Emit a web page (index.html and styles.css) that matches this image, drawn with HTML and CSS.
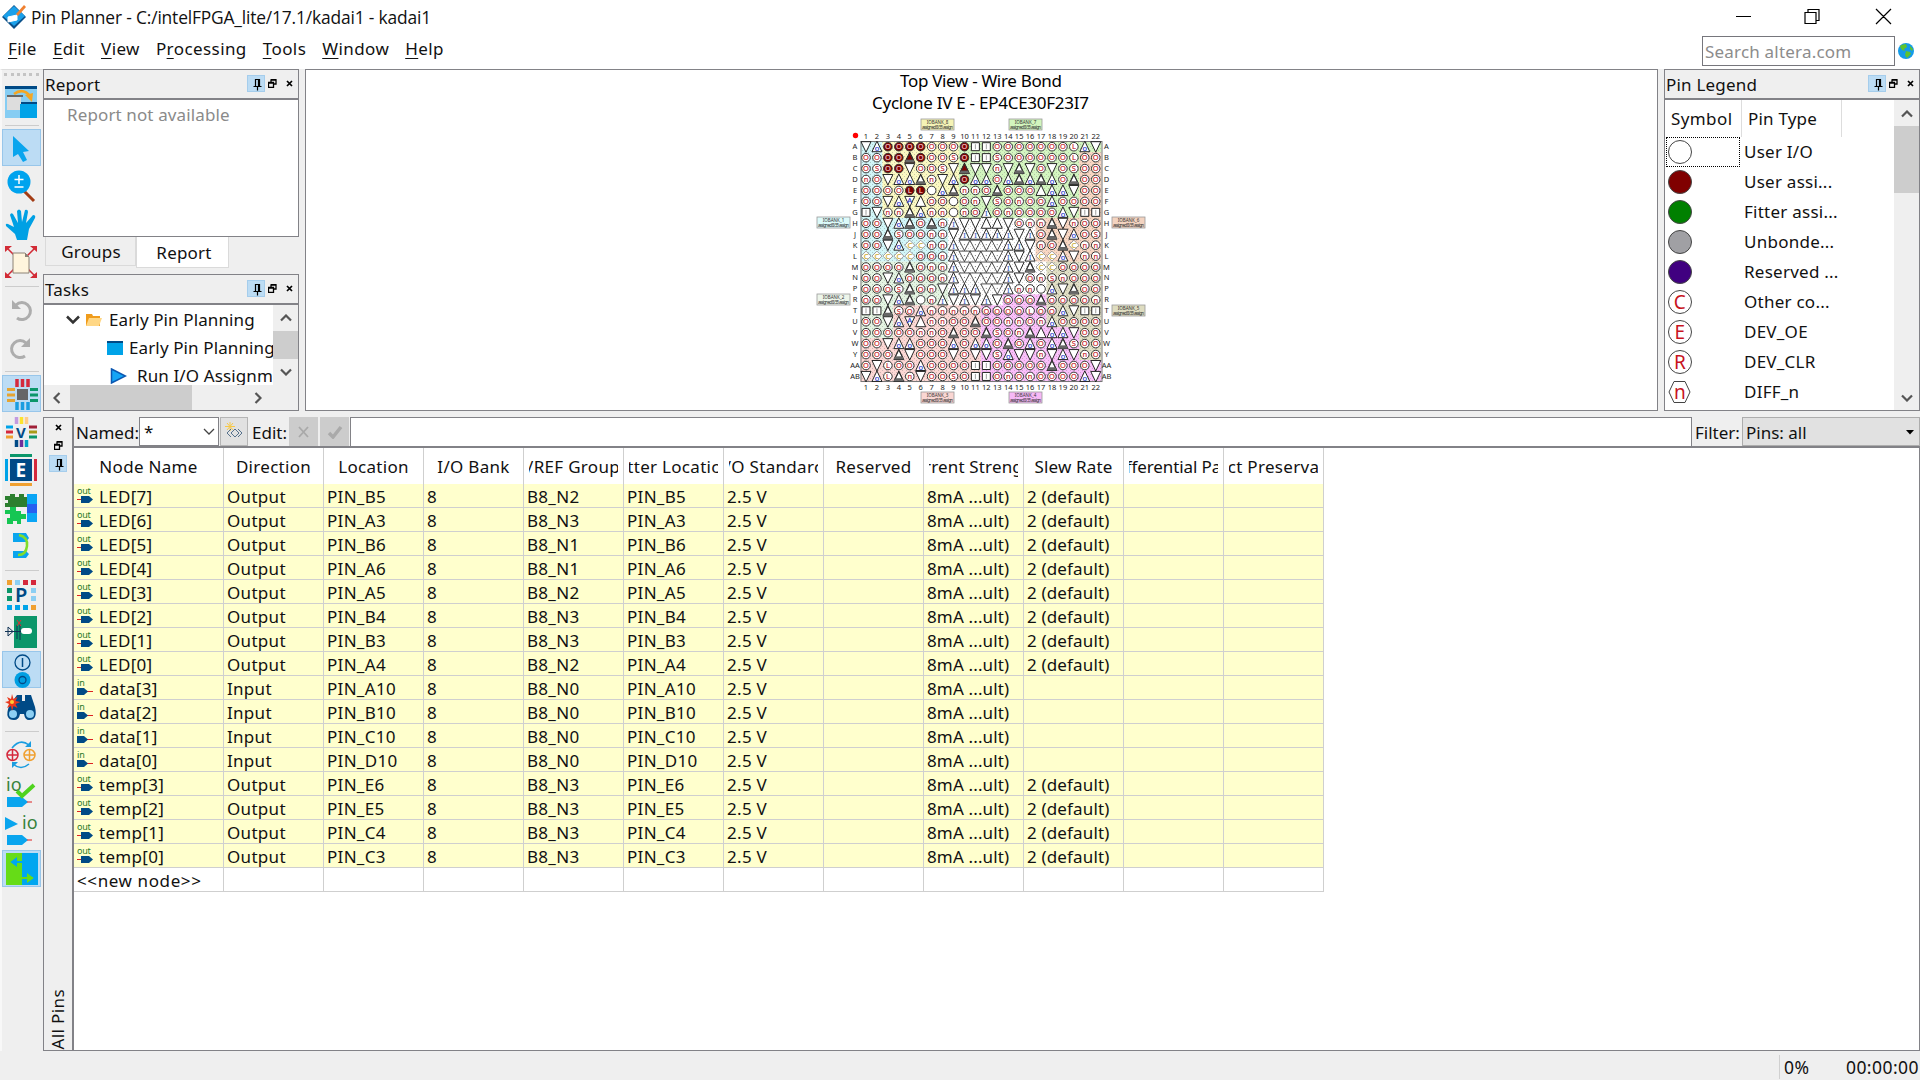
FILE: index.html
```
<!DOCTYPE html>
<html lang="en">
<head>
<meta charset="utf-8">
<title>Pin Planner</title>
<link rel="stylesheet" href="styles.css">
</head>
<body>
<svg class="defs" width="0" height="0">
  <symbol id="pin" viewBox="0 0 16 15"><path d="M7.500 3.500h4v7h-4zM5.500 10.500h8M9.500 10.500v4M10.500 4v6" fill="none" stroke="#000" stroke-width="1.200"/></symbol>
  <symbol id="float" viewBox="0 0 9 9"><path d="M3 3V1h5v4H6M3 .7h5.500M.5 3.500h5v5h-5zM.5 4h5" fill="none" stroke="#000" stroke-width="1.300"/></symbol>
  <symbol id="close" viewBox="0 0 7 7"><path d="M1 1l5 5M6 1l-5 5" stroke="#000" stroke-width="1.700"/></symbol>
  <symbol id="chev" viewBox="0 0 12 8"><path d="M1 1.500l5 5 5-5" fill="none" stroke="#555" stroke-width="2.200"/></symbol>
</svg>

<header class="titlebar">
  <svg class="logo" width="24" height="24" viewBox="0 0 24 24"><path d="M12 0l12 12-12 12L0 12z" fill="#0a4f88"/><path d="M12 1l11 10-11 10L1 11z" fill="#1aa0ea"/><path d="M6 12l9-2v5l-9 2z" fill="#fff" stroke="#fff"/><path d="M14 9l8-9 2 2-8 9z" fill="#f08030"/></svg>
  <span class="title">Pin Planner - C:/intelFPGA_lite/17.1/kadai1 - kadai1</span>
  <svg class="winbtns" width="160" height="20" viewBox="0 0 160 20" fill="none" stroke="#000" stroke-width="1.200"><path d="M0 9.500h15M69 5.500h11v11H69zM72 5V2.500h11v11h-3M140 2l15 15M155 2l-15 15"/></svg>
</header>
<div class="menubar">
  <nav class="menu"><span><u>F</u>ile</span><span><u>E</u>dit</span><span><u>V</u>iew</span><span>P<u>r</u>ocessing</span><span><u>T</u>ools</span><span><u>W</u>indow</span><span><u>H</u>elp</span></nav>
  <div class="search">Search altera.com</div>
  <svg width="16" height="16" viewBox="0 0 16 16"><circle cx="8" cy="8" r="8" fill="#149be8"/><path d="M3 2l5-1 1 3-3 2 1 2-3-1-2-3zM8 8l4 1 1 2-4 4-2-3zM12 3l3 3-1 2-2-2z" fill="#5fc32e"/></svg>
</div>

<div class="body">
  <aside class="tools">
    <i class="grip"></i>
    <b class="tb"><svg viewBox="0 0 32 32"><path fill="#86cdf3" d="M0 0h32v32H0z"/><path fill="#004a86" d="M0 0h32v3H0zM15 16h17v2H15z"/><path fill="#ddd" d="M2 10h14v14H2z"/><path fill="#666" d="M2 9h16v2H2z"/><path fill="#00a3e8" d="M15 18h17v14H15z"/><path d="M9 8q9-7 17 3" fill="none" stroke="#f5a623" stroke-width="2.500"/><path d="M20 9l7 7 1-9z" fill="#f5a623"/></svg></b>
    <i class="sep s8"></i>
    <b class="tb on"><svg viewBox="0 0 32 32"><path d="M8 4v21l5-3 5 8 4-2-4-8 6-1z" fill="#0aa5ee"/></svg></b>
    <b class="tb"><svg viewBox="0 0 32 32"><path d="M19 21l10 10" stroke="#a33c14" stroke-width="3"/><circle cx="14" cy="12" r="11.500" fill="#00a3ee"/><path d="M9.500 9.500h9M14 5v9M9.500 17h9" stroke="#fff" stroke-width="1.500"/></svg></b>
    <b class="tb"><svg viewBox="0 0 32 32"><path d="M12 32l-2-6L1 18q-1-3 2-2l6 3L5 7q1-3 3-1l5 9-1-12q2-3 4 0l1 11 3-12q3-1 3 2l-2 11 7-8q3 0 2 3l-6 11-2 11z" fill="#00a0e4"/></svg></b>
    <b class="tb"><svg viewBox="0 0 32 32"><path d="M2 2l28 28M30 2L2 30" stroke="#d22b36" stroke-width="1.500"/><path d="M0 0h7L0 6zM32 0h-7l7 6zM0 32h7l-7-6zM32 32h-7l7-6z" fill="#d22b36"/><path d="M8 7h12l4 4v16H8z" fill="#fff5dd" stroke="#8c8376"/><path d="M20 7v4h4z" fill="#8c8376"/></svg></b>
    <i class="sep s10"></i>
    <b class="tb"><svg viewBox="0 0 32 32"><path d="M12 24a8.500 8.500 0 1 0-1-13" fill="none" stroke="#adadad" stroke-width="3"/><path d="M7 6v9h9z" fill="#adadad"/></svg></b>
    <b class="tb"><svg viewBox="0 0 32 32"><path d="M20 24a8.500 8.500 0 1 1 1-13" fill="none" stroke="#adadad" stroke-width="3"/><path d="M25 6v9h-9z" fill="#adadad"/></svg></b>
    <i class="sep s8"></i>
    <b class="tb on"><svg viewBox="0 0 32 32"><path d="M12 11h11v11H12z" fill="#666"/><path d="M12 1v8M17.500 1v8M23 1v8" stroke="#d5293d" stroke-width="3.500"/><path d="M12 24v8M17.500 24v8M23 24v8" stroke="#1a9de0" stroke-width="3.500"/><path d="M2 11.500h8M2 17h8M2 22.500h8" stroke="#e5a431" stroke-width="3"/><path d="M25 11.500h8M25 17h8M25 22.500h8" stroke="#0b966a" stroke-width="3"/></svg></b>
    <b class="tb"><svg viewBox="0 0 32 32"><path d="M16.500 1v7" stroke="#fce32d" stroke-width="3.500"/><path d="M11.500 1v7" stroke="#c39be0" stroke-width="3.500"/><path d="M21.500 1v7" stroke="#fc8" stroke-width="3.500"/><path d="M11.500 24v7" stroke="#004a86" stroke-width="3.500"/><path d="M16.500 24v7" stroke="#6e2f9b" stroke-width="3.500"/><path d="M21.500 24v7" stroke="#00a3c8" stroke-width="3.500"/><path d="M1 11h7" stroke="#00a3e8" stroke-width="3"/><path d="M1 16h7" stroke="#d5293d" stroke-width="3"/><path d="M1 21h7" stroke="#f0a030" stroke-width="3"/><path d="M24 11h8" stroke="#a02038" stroke-width="3"/><path d="M24 16h8" stroke="#a89b18" stroke-width="3"/><path d="M24 21h8" stroke="#0b966a" stroke-width="3"/><text x="11" y="21.500" class="ic">V</text></svg></b>
    <b class="tb"><svg viewBox="0 0 32 32"><path d="M5 5h22v22H5z" fill="#004a86"/><path d="M5 0h22v3H5z" fill="#0b966a"/><path d="M5 29h22v3H5z" fill="#f0a030"/><path d="M0 5h3v22H0z" fill="#00a3e8"/><path d="M29 5h3v22h-3z" fill="#d5293d"/><text x="10.500" y="23" class="ic e">E</text></svg></b>
    <b class="tb"><svg viewBox="0 0 32 32"><path d="M0 4h5V2h5v3h4V2h5v3h3v10H0v-4h3V8H0z" fill="#2c7f2f"/><path d="M0 18h5v-3h6v4h5v3h5v5h-5v5h-4v-3H8v3H2v-6h3v-4H0z" fill="#16c653"/><path d="M22 2h10v28H22z" fill="#0aa5f5"/><path d="M22 12h10v9H22z" fill="#275ff0"/></svg></b>
    <b class="tb"><svg viewBox="0 0 32 32"><path d="M8 3h13l3 5-3 4H8zM8 21h13l3 3-3 4H8z" fill="#0aa5ee"/><path d="M14 5q9 2 8 11t-9 9" fill="none" stroke="#80dd2c" stroke-width="2.500"/></svg></b>
    <i class="sep s10"></i>
    <b class="tb"><svg viewBox="0 0 32 32"><g stroke-width="5" fill="none"><path d="M2 4.500h30" stroke="#d5293d" stroke-dasharray="5 3"/><path d="M2 4.500h5M26 29.500h5" stroke="#f0a030"/><path d="M10 4.500h5" stroke="#8ccff3"/><path d="M2 29.500h22" stroke="#00a3e8" stroke-dasharray="5 3"/><path d="M4.500 10v16" stroke="#0b966a" stroke-dasharray="5 3"/><path d="M28.500 10v16" stroke="#8ccff3" stroke-dasharray="5 3"/></g><text x="10" y="24" class="ic p">P</text></svg></b>
    <b class="tb"><svg viewBox="0 0 32 32"><path d="M9 0h23v32H9z" fill="#0b966a"/><path d="M0 15.500h17M12 9v14M15 8v16M8 15.500L3 11v9z" fill="#eee" stroke="#135" /><path d="M12 4l4 6M16 4l-4 6" stroke="#d33"/><rect x="16" y="12" width="11" height="6" rx="3" fill="#fff"/></svg></b>
    <b class="tb on"><svg viewBox="0 0 32 32"><circle cx="17.500" cy="8.500" r="7.500" fill="none" stroke="#004a86" stroke-width="1.300"/><path d="M17.500 4v9" stroke="#004a86" stroke-width="1.500"/><circle cx="17.500" cy="26" r="8" fill="#009fe2"/><circle cx="17.500" cy="26" r="3.500" fill="none" stroke="#004a86" stroke-width="1.300"/></svg></b>
    <b class="tb"><svg viewBox="0 0 32 32"><path d="M4 14L12 3h5v6h3V3h6l4 12q3 13-6 13-4 0-5-6h-4q-1 6-6 6Q-1 28 4 14z" fill="#004a86"/><circle cx="8" cy="22" r="4" fill="#8ccff3"/><circle cx="25" cy="22" r="4" fill="#8ccff3"/><path d="M7 2l1.500 5 4-2-2 4 5 1-5 2 2 4-4-2-1.500 5-1-5-4 2 2-4-4-2 4-1-2-4 4 2z" fill="#e9381c"/><circle cx="7" cy="10" r="2" fill="#fc3"/></svg></b>
    <i class="sep s9"></i>
    <b class="tb"><svg viewBox="0 0 32 32"><g fill="none" stroke-width="1.500"><path d="M7 9q8-10 17-3M24 25q-8 7-16 0" stroke="#1a9de0"/><circle cx="7.500" cy="16" r="5.500" stroke="#d5293d"/><path d="M2 16h11M7.500 10.500v11" stroke="#d5293d"/><circle cx="24.500" cy="16" r="5.500" stroke="#f0a030"/><path d="M19 16h11M24.500 10.500v11" stroke="#f0a030"/></g><path d="M20 8h6V2zM7 29v-6h6z" fill="#1a9de0"/></svg></b>
    <b class="tb"><svg viewBox="0 0 32 32"><text x="1" y="14" class="io">io</text><path d="M2 20h15l6 5-6 5H2z" fill="#0aa5ee"/><path d="M22 25h5" stroke="#d22"/><path d="M12 14l5 5L29 8" fill="none" stroke="#4fd31e" stroke-width="4"/></svg></b>
    <b class="tb"><svg viewBox="0 0 32 32"><path d="M0 2l13 7-13 6z" fill="#0aa5ee"/><text x="17" y="14" class="io">io</text><path d="M2 20h15l6 5-6 5H2z" fill="#0aa5ee"/><path d="M22 25h5" stroke="#d22"/></svg></b>
    <b class="tb on"><svg viewBox="0 0 32 32"><path d="M1 0h16v32H1z" fill="#66dc17"/><path d="M17 0h16v32H17z" fill="#00a6f0"/><path d="M17 9H7M11 6l-4 3 4 3z" fill="#00a6f0" stroke="#00a6f0" stroke-width="2"/><path d="M17 25h11M23 22l4 3-4 3z" fill="#66dc17" stroke="#66dc17" stroke-width="2"/></svg></b>
  </aside>

  <main class="work">
    <section class="upper">
      <div class="left">
        <div class="dock report">
          <div class="dtitle"><span>Report</span><svg class="pin"><use href="#pin"/></svg><svg class="flt"><use href="#float"/></svg><svg class="cls"><use href="#close"/></svg></div>
          <div class="rbody">Report not available</div>
        </div>
        <div class="tabs"><span class="tab">Groups</span><span class="tab sel">Report</span></div>
        <div class="dock tasks">
          <div class="dtitle"><span>Tasks</span><svg class="pin"><use href="#pin"/></svg><svg class="flt"><use href="#float"/></svg><svg class="cls"><use href="#close"/></svg></div>
          <div class="tbody">
            <div class="tree">
              <div class="n1"><svg width="14" height="10"><path d="M1 1.500l6 6 6-6" fill="none" stroke="#333" stroke-width="2.500"/></svg><svg width="16" height="14"><path d="M0 1h6l1 2h7v10H0z" fill="#f09c1c"/><path d="M3 5h13l-3 8H0z" fill="#ffd785"/></svg><span>Early Pin Planning</span></div>
              <div class="n2"><svg width="16" height="14"><path d="M0 0h16v14H0z" fill="#00a3e8"/><path d="M0 0h16v2H0z" fill="#004a86"/></svg><span>Early Pin Planning</span></div>
              <div class="n3"><svg width="17" height="16"><path d="M1.500 1l14 7-14 7z" fill="#16a5f5" stroke="#0b56b0" stroke-width="1.500"/></svg><span>Run I/O Assignm</span></div>
            </div>
            <div class="vs"><svg class="up"><use href="#chev"/></svg><i></i><svg><use href="#chev"/></svg></div>
          </div>
          <div class="hs"><svg class="lf"><use href="#chev"/></svg><i></i><svg class="rt"><use href="#chev"/></svg></div>
        </div>
      </div>
      <div class="view"><svg id="chip" width="1350" height="340" viewBox="306 70 1350 340"></svg></div>
      <div class="dock legend">
        <div class="dtitle"><span>Pin Legend</span><svg class="pin"><use href="#pin"/></svg><svg class="flt"><use href="#float"/></svg><svg class="cls"><use href="#close"/></svg></div>
        <div class="lwrap">
          <div class="lmain">
            <div class="lhead"><span>Symbol</span><span>Pin Type</span></div>
            <div id="legend"></div>
          </div>
          <div class="vs lvs"><svg class="up"><use href="#chev"/></svg><i></i><svg><use href="#chev"/></svg></div>
        </div>
      </div>
    </section>

    <section class="lower">
      <div class="side"><svg class="cls"><use href="#close"/></svg><svg class="flt"><use href="#float"/></svg><svg class="pin"><use href="#pin"/></svg><span>All Pins</span></div>
      <div class="pins">
        <div class="editbar">
          <label>Named:</label>
          <div class="combo"><span>*</span><svg width="12" height="8"><path d="M1 1l5 5 5-5" fill="none" stroke="#444" stroke-width="1.300"/></svg></div>
          <div class="sbtn"><svg width="20" height="20"><path d="M5 0v9M0 4.500h10M2 1l6 7M8 1L2 8" stroke="#f7c948"/><path d="M6 7l-4 4 4 4M10 7l-4 4 4 4M10 7l4 4-4 4M13 7l4 4-4 4" fill="none" stroke="#357" stroke-width=".8"/></svg></div>
          <label class="ed">Edit:</label>
          <div class="gbtn"><svg width="14" height="14"><path d="M2 2l9 10M11 2L2 12" stroke="#a9a9a9" stroke-width="1.800"/></svg></div>
          <div class="gbtn g2"><svg width="16" height="14"><path d="M2 8l4 4 8-10" fill="none" stroke="#aaa" stroke-width="3.500"/></svg></div>
          <div class="field"></div>
          <label class="fl">Filter:</label>
          <div class="filter"><span>Pins: all</span><svg width="8" height="5"><path d="M0 0h8L4 4.500z"/></svg></div>
        </div>
        <div class="grid" id="grid"></div>
      </div>
    </section>
  </main>
</div>
<footer class="status"><span class="pct">0%</span><span>00:00:00</span></footer>
<script src="script.js"></script>
</body>
</html>
```
FILE: styles.css
```
* { box-sizing: border-box; }
body { margin: 0; width: 1920px; height: 1080px; overflow: hidden; background: #efefef; color: #111; font: 17px/24px "Noto Sans", "Noto Sans CJK JP", sans-serif; display: flex; flex-direction: column; white-space: nowrap; }
svg { display: block; flex: none; }
.defs { position: absolute; }
.titlebar { height: 33px; background: #fff; display: flex; align-items: center; padding-left: 2px; flex: none; }
.title { margin-left: 5px; flex: 1; font: 17.4px/24px "Open Sans", "Noto Sans", sans-serif; letter-spacing: -.17px; }
.winbtns { margin-right: 24px; }
.menubar { height: 36px; background: #fff; display: flex; padding-right: 6px; flex: none; }
.menu { display: flex; gap: 16px; padding: 4px 0 0 8px; flex: 1; letter-spacing: .42px; }
.menu u { text-underline-offset: 3px; text-decoration-thickness: 1px; }
.search { width: 193px; height: 30px; border: 1px solid #76767c; margin: 3px 3px 0 0; padding: 3px 2px; color: #8c8c8c; letter-spacing: .2px; }
.menubar > svg { margin-top: 10px; }
.body { display: flex; height: 982px; flex: none; }
.tools { width: 43px; display: flex; flex-direction: column; border-top: 1px solid #ddd; border-left: 2px solid #f8f8f8; flex: none; }
.grip { flex: none; margin: 0 4px 7px 2px; border-bottom: 3px dotted #c4c4c4; height: 6px; }
.tb { height: 38px; width: 39px; flex: none; display: flex; align-items: center; justify-content: center; border: 1px solid transparent; padding-right: 2px; }
.tb.on { background: #bcdcf4; border-color: #98c6ea; height: 37px; margin-bottom: 1px; }
.tb svg { width: 32px; height: 32px; overflow: visible; }
.ic { font: bold 15px "Noto Sans", sans-serif; fill: #004a86; }
.e { font-size: 19px; fill: #fff; }
.p { font-size: 20px; font-weight: 600; }
.io { font: 18px "Noto Sans", sans-serif; fill: #38823c; }
.sep { margin: 0 4px 0 3px; flex: none; background: linear-gradient(#ccc, #ccc) center / 100% 1px no-repeat; }
.s8 { height: 8px; } .s9 { height: 9px; } .s10 { height: 10px; }
.work { flex: 1; display: flex; flex-direction: column; min-width: 0; }
.upper { height: 342px; display: flex; flex: none; }
.left { width: 256px; margin-right: 6px; display: flex; flex-direction: column; flex: none; }
.dock { border: 1px solid #828287; display: flex; flex-direction: column; }
.report { height: 168px; }
.dtitle { height: 30px; border-bottom: 2px solid #828287; display: flex; align-items: center; padding: 2px 5px 0 1px; flex: none; letter-spacing: .2px; }
.dtitle span { flex: 1; }
.pin { width: 16px; height: 15px; background: #bcdcf4; outline: 1px solid #a5cdec; margin-bottom: 3px; }
.flt { width: 9px; height: 9px; margin: 0 9px 3px 4px; }
.cls { width: 7px; height: 7px; margin-bottom: 3px; }
.rbody { flex: 1; background: #fff; color: #8a8a8a; padding: 3px 0 0 23px; letter-spacing: .12px; }
.tabs { height: 37px; display: flex; align-items: flex-start; padding-left: 2px; flex: none; }
.tab { width: 91px; height: 29px; border: 1px solid #dadada; border-top: 0; text-align: center; padding: 3px 0 0 1px; letter-spacing: .2px; }
.tab.sel { width: 93px; height: 31px; background: #fff; padding: 4px 0 0 3px; }
.tasks { height: 137px; }
.tbody { height: 80px; display: flex; background: #fff; overflow: hidden; }
.tree { flex: 1; overflow: hidden; min-width: 0; padding-top: 1px; letter-spacing: .12px; }
.tree > div { display: flex; align-items: center; height: 28px; }
.n1 { padding-left: 22px; } .n1 svg + svg { margin: 0 7px 0 6px; }
.n2 { padding-left: 63px; } .n2 svg { margin-right: 6px; }
.n3 { padding-left: 66px; } .n3 svg { margin-right: 10px; }
.vs { width: 25px; background: #efefef; display: flex; flex-direction: column; align-items: center; flex: none; }
.vs svg { width: 12px; height: 8px; margin: 9px 0; }
.vs i { width: 100%; height: 28px; background: #cdcdcd; flex: none; }
.up { transform: scaleY(-1); }
.lvs { justify-content: flex-start; }
.lvs svg { margin: 10px 0 8px; }
.lvs i { height: 67px; margin-bottom: auto; }
.hs { flex: 1; display: flex; align-items: center; background: #efefef; }
.hs svg { width: 12px; height: 8px; }
.hs i { width: 122px; align-self: stretch; background: #cdcdcd; margin: 0 60px 0 7px; }
.lf { transform: rotate(90deg); margin-left: 7px; } .rt { transform: rotate(-90deg); }
.view { width: 1353px; border: 1px solid #828287; background: #fff; margin-right: 6px; flex: none; }
#chip { font-family: "Noto Sans", sans-serif; }
.legend { width: 256px; flex: none; }
.lwrap { display: flex; flex: 1; background: #fff; min-height: 0; }
.lmain { flex: 1; overflow: hidden; }
.lhead { display: flex; height: 37px; }
.lhead span { width: 77px; border-right: 1px solid #ddd; padding: 7px 0 0 6px; letter-spacing: .4px; }
.lhead span + span { width: 100px; padding-left: 6px; letter-spacing: .2px; }
.lrow { display: flex; align-items: center; height: 30px; letter-spacing: .25px; }
.lsym { width: 74px; height: 30px; margin: 0 4px 0 1px; padding: 2px 0 0 1px; border: 1px solid transparent; flex: none; }
.lrow:first-child .lsym { border: 1px dotted #000; }
.lsym text { font-size: 19px; fill: #c8141e; text-anchor: middle; }
.lower { display: flex; margin-top: 6px; height: 634px; }
.side { width: 31px; border: 1px solid #828287; border-right: 2px solid #828287; display: flex; flex-direction: column; align-items: center; padding-top: 6px; flex: none; }
.side svg { margin: 0; } .side .flt { margin: 10px 0; } .side .pin { margin-top: -4px; }
.side span { writing-mode: vertical-rl; transform: rotate(180deg); margin-top: auto; letter-spacing: .4px; }
.pins { flex: 1; display: flex; flex-direction: column; min-width: 0; }
.editbar { height: 29px; display: flex; flex: none; }
.editbar label { padding: 4px 0 0 2px; width: 65px; }
.combo { width: 80px; height: 29px; background: #fff; border: 1px solid #828287; display: flex; align-items: center; justify-content: space-between; padding: 0 3px 0 4px; }
.sbtn { width: 28px; height: 29px; background: #e1e1e1; border: 1px solid #b5b5b5; margin-left: 1px; padding: 4px; }
.editbar .ed { width: 41px; padding-left: 4px; }
.gbtn { width: 29px; height: 29px; background: #ccc; display: flex; align-items: center; justify-content: center; margin-right: 2px; }
.gbtn.g2 { margin-right: 1px; }
.field { flex: 1; height: 29px; background: #fff; border: 1px solid #828287; border-bottom: 0; }
.editbar .fl { width: 50px; padding-left: 3px; }
.filter { width: 178px; border: 1px solid #adadad; background: #e1e1e1; display: flex; align-items: center; justify-content: space-between; padding: 2px 5px 0 3px; }
.grid { flex: 1; background: #fff; border-top: 2px solid #828287; border-bottom: 1px solid #828287; border-right: 1px solid #828287; min-height: 0; }
.row { display: grid; grid-template-columns: 150px repeat(11, 100px); width: 1250px; height: 24px; }
.row div { border-right: 1px solid #cfcfcf; border-bottom: 1px solid #cfcfcf; background: #ffffcd; padding-left: 3px; overflow: hidden; line-height: 25px; letter-spacing: .3px; display: flex; }
.row div:nth-child(9), .row div:nth-child(10) { letter-spacing: .15px; }
.row div svg { width: 16px; height: 22px; margin: 0 6px 0 0; }
.row.new div { background: #fff; letter-spacing: .6px; }
.row.head { height: 36px; }
.row.head div { background: #fff; border-bottom: 0; padding: 6px 5px 0; justify-content: center; }
.row.head div:nth-child(11) { letter-spacing: -.1px; }
.row.head span { overflow: hidden; display: flex; justify-content: center; width: 100%; }
.status { height: 29px; display: flex; justify-content: flex-end; align-items: center; padding: 2px 1px 0 0; letter-spacing: .45px; font-size: 17.5px; }
.pct { border-left: 1px solid #d0d0d0; padding-left: 4px; width: 67px; }
```
FILE: script.js
```
// Pin table
const head = ['Node Name','Direction','Location','I/O Bank','VREF Group','Fitter Location','I/O Standard','Reserved','Current Strength','Slew Rate','Differential Pair','Strict Preservation'];
const shown = {4:'/REF Group', 5:'tter Locatic', 6:'/O Standarc', 8:'rrent Streng', 10:'fferential Pa', 11:'ct Preserva'};
const rows = ['LED[7] B5 2','LED[6] A3 3','LED[5] B6 1','LED[4] A6 1','LED[3] A5 2','LED[2] B4 3','LED[1] B3 3','LED[0] A4 2','data[3] A10 0','data[2] B10 0','data[1] C10 0','data[0] D10 0','temp[3] E6 3','temp[2] E5 3','temp[1] C4 3','temp[0] C3 3'];
const outIcon = '<svg viewBox="0 0 16 22"><text x="0" y="10" font-size="9" textLength="14" fill="#2a7a2a">out</text><path d="M0 15.500h5" stroke="#d22"/><path d="M4 12h8l4 3.500-4 3.500H4z" fill="#004a86"/></svg>';
const inIcon = '<svg viewBox="0 0 16 22"><text x="0" y="10" font-size="9" textLength="8" fill="#2a7a2a">in</text><path d="M10 15.500h6" stroke="#d22"/><path d="M0 12h7l4 3.500L7 19H0z" fill="#004a86"/></svg>';
let h = '<div class="row head">' + head.map((t, i) => `<div><span>${shown[i] || t}</span></div>`).join('') + '</div>';
rows.forEach(r => {
  const [n, p, v] = r.split(' ');
  const inp = n.startsWith('data');
  const cells = [(inp ? inIcon : outIcon) + n, inp ? 'Input' : 'Output', 'PIN_' + p, '8', 'B8_N' + v, 'PIN_' + p, '2.5 V', '', '8mA ...ult)', inp ? '' : '2 (default)', '', ''];
  h += '<div class="row">' + cells.map(c => `<div>${c}</div>`).join('') + '</div>';
});
h += '<div class="row new"><div>&lt;&lt;new node&gt;&gt;</div>' + '<div></div>'.repeat(11) + '</div>';
document.getElementById('grid').innerHTML = h;

// Legend
const leg = [['#fff','','User I/O'],['#800000','','User assi...'],['#008000','','Fitter assi...'],['#a0a0a4','','Unbonde...'],['#400080','','Reserved ...'],['#fff','C','Other co...'],['#fff','E','DEV_OE'],['#fff','R','DEV_CLR'],['#fff','n','DIFF_n']];
document.getElementById('legend').innerHTML = leg.map(([f, t, l]) => {
  const shape = t === 'n' ? '<path d="M6 1.500h11l5 10.500-5 10.500H6L1 12z" fill="#fff" stroke="#444"/>' : `<circle cx="12" cy="12" r="11.500" fill="${f}" stroke="#444"/>`;
  return `<div class="lrow"><div class="lsym"><svg width="24" height="24">${shape}<text x="12" y="19">${t}</text></svg></div><span>${l}</span></div>`;
}).join('');

// Package view: one character per ball
const P = 10.94, X0 = 866, Y0 = 146.7;
const names = 'A B C D E F G H J K L M N P R T U V W Y AA AB'.split(' ');
const map = [
'DUFFFFcccFBBcccccccLUD','ccFFTFccsFBBsccccccLcc','csFFDccsDTDDnDVDcDcscc','ncDUUVnDUFUUcUVUVUcVcc',
'ccccFFeUVnncVcccuUUDcc','ccDUXuccecnDscnccUcccc','BDnnVUnnencIcnccccUDBB','ccDUVcVnIDDuuDcnnVDncc',
'ccVsccnnDIIIIIDIcVDUcs','ccDUYYnnIvvvvIIDncVYnn','YYYYYccnIvvvvIDIYYUDnn','ccccVcnnIvvvvIDVYYcccc',
'ccDUcccnIvvvvIDcnsnccc','cccsVcnDIIIvvInneUDVcc','ccDUVenIDIDIDcccVccccn','BBVscUnnnnnccccLccUDBB',
'ccDUXunnccVccnncnUcccc','cccccnncVccVscnVuUUDcc','ccDUUcccUcUUcVcUcUVscc','cccVDcccDcDDsUDDnDUDnc',
'cDLccUccccBBcccccVcccD','DULVnDccscBBcncnccccUD'];
const tint = (r, c) => {
  if (c < 2 && r > 0 && r < 11 || c < 8 && r > 6 && r < 11) return '#d0f6f8';
  if (c < 3 && r > 10 && r < 18 || c < 8 && r > 10 && r < 15) return '#e2f3e0';
  if (c > 19 && r > 0 && r < 11 || c > 15 && r > 6 && r < 11) return '#f8d5c0';
  if (c > 19 && r > 10 && r < 20 || c > 16 && r > 10 && r < 17) return '#dfddc2';
  if (r < 7) return c < 2 ? '#d0f6f8' : c < 9 ? '#faf8c0' : '#d2f5be';
  if (r > 14 && c > 10 || r > 13 && c > 12) return '#fabdfa';
  if (r > 14) return '#fcd6d3';
  return '#fff';
};
let s = '<defs><pattern id="dots" width="4" height="4" patternUnits="userSpaceOnUse"><path d="M0 0h1v1H0zM2 2h1v1H2z" fill="#777" opacity=".35"/></pattern></defs>';
s += '<g font-size="17" text-anchor="middle"><text x="981" y="87.400" textLength="162">Top View - Wire Bond</text><text x="980.500" y="109.400" textLength="217">Cyclone IV E - EP4CE30F23I7</text></g>';
for (let r = 0; r < 22; r++) for (let c = 0; c < 22; c++)
  s += `<rect x="${X0 + (c - .5) * P}" y="${Y0 + (r - .5) * P}" width="11.200" height="11.200" fill="${tint(r, c)}"/>`;
s += '<rect x="861" y="141.500" width="241" height="240" fill="url(#dots)" stroke="#777"/>';
const tri = (x, y, d, f) => `<path d="M${x - 5} ${y + 5 * d}h10l-5 ${-10.5 * d}z" fill="${f}" stroke="#111" stroke-width=".9"/>`;
const ch = (x, y, t, f) => `<text x="${x}" y="${y + 2.700}" font-size="7.500" text-anchor="middle" fill="${f}" stroke="${f}" stroke-width=".15">${t}</text>`;
map.forEach((line, r) => [...line].forEach((k, c) => {
  const x = X0 + c * P, y = Y0 + r * P;
  const circ = f => `<circle cx="${x}" cy="${y}" r="4.300" fill="${f}" stroke="#333"/>`;
  if ('cnseL'.includes(k)) s += circ('#fff') + (k === 'e' ? '' : ch(x, y, {c: 'O', n: 'n', s: 'S', L: 'L'}[k], '#c41c28'));
  else if (k === 'F') s += circ('#800000') + ch(x, y, r === 4 ? 'L' : 'O', '#f0c8c8');
  else if (k === 'D') s += tri(x, y, -1, '#fff');
  else if (k === 'u') s += tri(x, y, 1, '#fff');
  else if (k === 'U') s += tri(x, y, 1, '#fff') + ch(x, y + 1.500, 'o', '#2030c8');
  else if (k === 'I') s += tri(x, y, 1, '#fff') + ch(x, y + 1, 'I', '#4060c0');
  else if (k === 'v') s += `<path d="M${x - 5.500} ${y - 5}h11l-5.500 10.500z" fill="#fff" stroke="#222" stroke-width=".8"/><path d="M${x} ${y - 1}v1" stroke="#777"/>`;
  else if (k === 'X') s += tri(x, y, -1, '#fff') + ch(x, y - 1, 'A', '#2030c8');
  else if (k === 'V' || k === 'T') s += tri(x, y, 1, k === 'T' ? '#800000' : '#fff') + `<path d="M${x} ${y - 4.500}l-3.500 7h7z" fill="${k === 'T' ? '#800000' : 'none'}" stroke="#333"/><path d="M${x - 3.800} ${y + 2.200}h7.600l1 2.600h-9.600z" fill="#666"/>`;
  else if (k === 'B') s += `<path d="M${x - 4} ${y - 4}h8v8h-8z" fill="#fff" stroke="#222"/><path d="M${x} ${y - 2.500}v5" stroke="#888" stroke-width=".8"/>`;
  else if (k === 'Y') s += `<path d="M${x - 5} ${y}l5-5 5 5-5 5z" fill="#fff" stroke="#888" stroke-width=".8"/>` + ch(x, y, 'C', '#c8a828');
}));
for (let i = 0; i < 22; i++) {
  const x = X0 + i * P, y = Y0 + i * P + 2.500;
  s += `<g font-size="7.500" fill="#222" text-anchor="middle"><text x="${x}" y="138.800">${i + 1}</text><text x="${x}" y="390.300">${i + 1}</text><text x="855" y="${y}">${names[i]}</text><text x="1106.500" y="${y}">${names[i]}</text></g>`;
}
s += '<circle cx="855.500" cy="135.500" r="2.700" fill="#f00"/>';
[[921,119,8,'#f5f3b5'],[1009,119,7,'#d2f5bd'],[817,217,1,'#dcfafa'],[1112,217,6,'#f3d3c0'],[817,294,2,'#edf5ea'],[1112,305,5,'#dedcc0'],[921,392,3,'#fad6d2'],[1009,392,4,'#f6b8f6']].forEach(([x, y, n, f]) => {
  s += `<rect x="${x}" y="${y}" width="33" height="11" fill="${f}" stroke="#999" stroke-width=".8"/><g text-anchor="middle" fill="#333"><text x="${x + 16.500}" y="${y + 4.500}" font-size="4.500">IOBANK_${n}</text><text x="${x + 16.500}" y="${y + 10}" font-size="4.500" textLength="31">assigned 8/35 assign</text></g>`;
});
document.getElementById('chip').innerHTML = s;
```
